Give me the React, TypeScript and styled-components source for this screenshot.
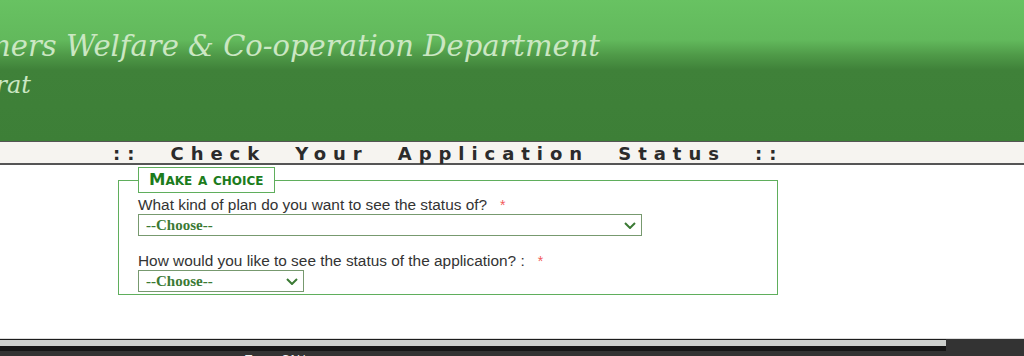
import React from "react";
import styled, { createGlobalStyle } from "styled-components";

const Global = createGlobalStyle`
  html, body { margin: 0; padding: 0; background: #fff; }
  body { width: 1024px; font-family: "Liberation Sans", Arial, sans-serif; overflow: hidden; }
`;

const Header = styled.header`
  height: 141px;
  overflow: hidden;
  background: linear-gradient(
    to bottom,
    #68c262 0px,
    #62b95c 40px,
    #4f9a48 55px,
    #3f8139 70px,
    #3d7f37 141px
  );
  display: flex;
  flex-direction: column;
`;

const HeaderLine = styled.div<{ $w: number; $size: number; $lh: number; $top: number }>`
  width: ${(p) => p.$w}px;
  margin-top: ${(p) => p.$top}px;
  display: flex;
  justify-content: flex-end;
  white-space: nowrap;
  font-family: "DejaVu Serif", Georgia, serif;
  font-style: italic;
  font-size: ${(p) => p.$size}px;
  line-height: ${(p) => p.$lh}px;
  color: #cbe7c3;
`;

const TitleBar = styled.div`
  height: 18px;
  padding-top: 3px;
  border-top: 1px solid #555;
  border-bottom: 2px solid #555;
  background: #f6f4f0;
  padding-left: 113px;
  font-family: "DejaVu Sans", Verdana, sans-serif;
  font-weight: bold;
  font-size: 18px;
  line-height: 18px;
  letter-spacing: 6.95px;
  word-spacing: 16px;
  color: #2b2b2b;
  white-space: nowrap;
`;

const Main = styled.main`
  padding: 2px 0 43px 118px;
`;

const Fieldset = styled.fieldset`
  margin: 0;
  width: 660px;
  box-sizing: border-box;
  border: 1px solid #5fae5c;
  padding: 3px 10px 2px 19px;
  min-width: 0;
`;

const Legend = styled.legend`
  box-sizing: border-box;
  height: 26px;
  padding: 0 10px 0 10px;
  border: 1px solid #5fae5c;
  font-family: "DejaVu Sans", Verdana, sans-serif;
  font-weight: bold;
  font-variant: small-caps;
  font-size: 16.5px;
  line-height: 24px;
  color: #1c7c1c;
`;

const Field = styled.div<{ $gap?: number }>`
  display: flex;
  flex-direction: column;
  align-items: flex-start;
  margin-top: ${(p) => p.$gap ?? 0}px;
`;

const Label = styled.label`
  font-family: "Liberation Sans", Arial, sans-serif;
  font-size: 15.4px;
  line-height: 17px;
  color: #333;
  white-space: nowrap;
`;

const Required = styled.span`
  color: #f25a5a;
  font-size: 14px;
  margin-left: 13px;
`;

const SelectWrap = styled.div<{ $w: number }>`
  position: relative;
  width: ${(p) => p.$w}px;
  height: 22px;
`;

const Select = styled.select`
  appearance: none;
  -webkit-appearance: none;
  width: 100%;
  height: 22px;
  box-sizing: border-box;
  margin: 0;
  border: 1px solid #77996f;
  border-radius: 0;
  background: #fff;
  padding: 0 24px 0 7px;
  font-family: "Liberation Serif", "Times New Roman", serif;
  font-weight: bold;
  font-size: 15px;
  color: #3b7a34;
  outline: none;
`;

const Chevron = styled.svg`
  position: absolute;
  right: 6px;
  top: 8px;
  width: 12px;
  height: 7px;
  pointer-events: none;
`;

const Footer = styled.footer`
  border-top: 1px solid #dcdcdc;
  background: #333;
  height: 40px;
`;

const FooterInner = styled.div`
  width: 946px;
  border-top: 1px solid #1c1c1c;
`;

const FooterStripe = styled.div`
  height: 6px;
  background: #cdd0cd;
  border-bottom: 5px solid #161616;
`;

const FooterLinks = styled.div`
  padding-left: 245px;
  padding-top: 1px;
  font-family: "Liberation Sans", Arial, sans-serif;
  font-size: 12px;
  line-height: 16px;
  color: #f0f0f0;
`;

const ChoiceSelect: React.FC<{ width: number; id: string }> = ({ width, id }) => (
  <SelectWrap $w={width}>
    <Select id={id} defaultValue="">
      <option value="">--Choose--</option>
    </Select>
    <Chevron viewBox="0 0 12 7">
      <path d="M1 1 L6 6 L11 1" fill="none" stroke="#3b7a34" strokeWidth="2" />
    </Chevron>
  </SelectWrap>
);

export default function App() {
  return (
    <>
      <Global />
      <Header>
        <HeaderLine $w={600} $size={29} $lh={34} $top={29}>
          Agriculture, Farmers Welfare &amp; Co-operation Department
        </HeaderLine>
        <HeaderLine $w={31} $size={24} $lh={28} $top={8}>
          Government of Gujarat
        </HeaderLine>
      </Header>
      <TitleBar>:: Check Your Application Status ::</TitleBar>
      <Main>
        <Fieldset>
          <Legend>Make a choice</Legend>
          <Field>
            <Label htmlFor="plan">
              What kind of plan do you want to see the status of?
              <Required>*</Required>
            </Label>
            <ChoiceSelect id="plan" width={504} />
          </Field>
          <Field $gap={16}>
            <Label htmlFor="mode">
              How would you like to see the status of the application? :
              <Required>*</Required>
            </Label>
            <ChoiceSelect id="mode" width={166} />
          </Field>
        </Fieldset>
      </Main>
      <Footer>
        <FooterInner>
          <FooterStripe />
          <FooterLinks>Terms Of Use</FooterLinks>
        </FooterInner>
      </Footer>
    </>
  );
}
